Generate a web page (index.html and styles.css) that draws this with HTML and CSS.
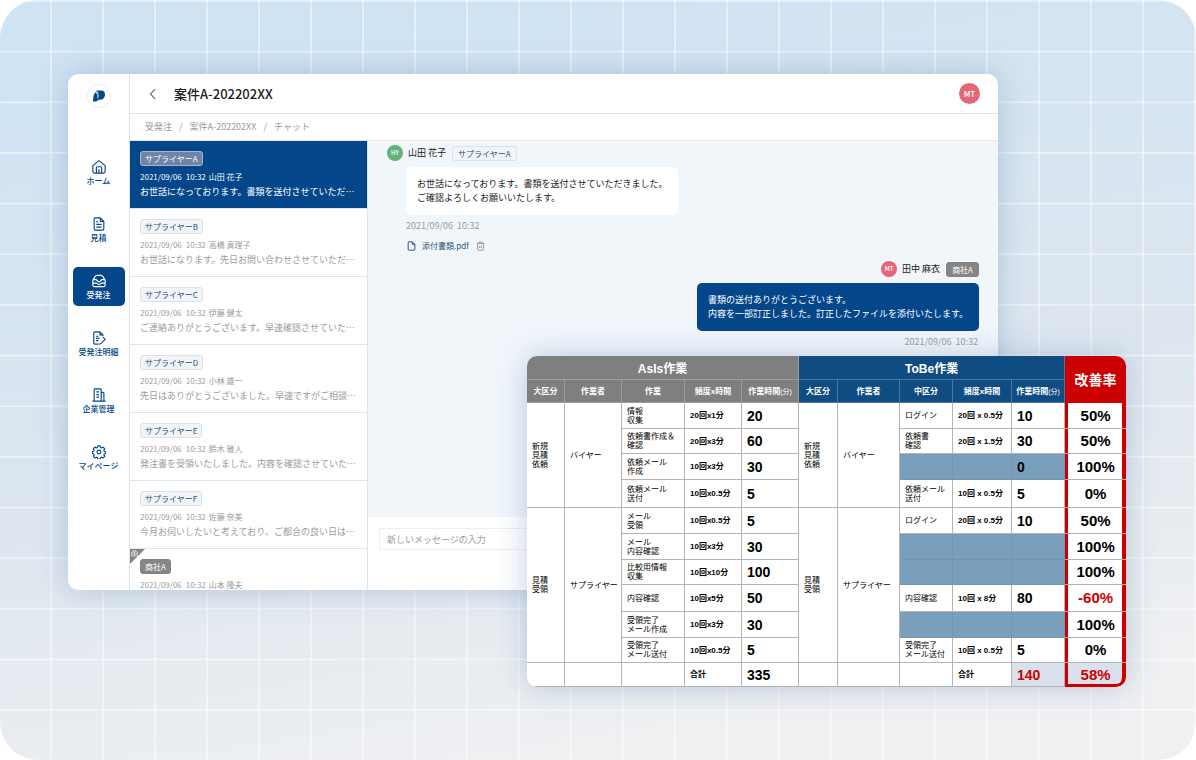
FILE: index.html
```html
<!DOCTYPE html>
<html lang="ja">
<head>
<meta charset="utf-8">
<title>案件A-202202XX</title>
<link rel="stylesheet" href="styles.css">
</head>
<body>
<main class="stage">
  <section class="app">
    <aside class="side">
      <a class="logo" href="#" aria-label="トップ">
        <svg viewBox="0 0 24 24"><path d="M9 6h5.500c2.600 0 4 1.800 4 4.300 0 3.500-2.200 5.700-6 5.700H11z"/><path d="M8.500 8C6.500 9.500 5.500 12 5.500 18H8c2.500 0 3.500-1.500 3.500-4z"/><path class="slit" d="M9.800 7c1.300 2 1.500 5 .7 7.500"/></svg>
      </a>
      <nav class="nav">
        <a class="nav-item" href="#"><svg viewBox="0 0 16 16"><path d="M1 6.500v6.700C1 14.300 1.700 15 2.800 15h10.400c1.100 0 1.800-.7 1.800-1.800V6.500L8.900 1.300a1.400 1.400 0 0 0-1.800 0zM5 15V9c0-.8.500-1.300 1.200-1.300h3.600c.7 0 1.200.5 1.200 1.300v6M8 10.500V15"/></svg>ホーム</a>
        <a class="nav-item" href="#"><svg viewBox="0 0 16 16"><path d="M9.500 1H4a1.500 1.500 0 0 0-1.500 1.500v11A1.500 1.500 0 0 0 4 15h8a1.500 1.500 0 0 0 1.500-1.500V5zM9.500 1v4h4M5 5.500h2M5 8.500h6M5 11.500h6"/></svg>見積</a>
        <a class="nav-item active" href="#"><svg viewBox="0 0 16 16"><path d="M1 7 3.500 3C4.200 1.900 5 1.500 6 1.500h4c1 0 1.800.4 2.500 1.500L15 7v5.500c0 1.200-.8 2-2 2H3c-1.200 0-2-.8-2-2zM1 6.500h3.500C6 6.500 6 9 8 9s2-2.500 3.500-2.500H15M1 10.500h4c.8 0 1 1.500 3 1.500s2.200-1.500 3-1.500h4"/></svg>受発注</a>
        <a class="nav-item" href="#"><svg viewBox="0 0 16 16"><path d="M12.500 6V4.500L9 1H3.500A1.500 1.500 0 0 0 2 2.500v11A1.500 1.500 0 0 0 3.500 15H7M9 1v3.500h3.500M4.500 6h3M4.500 8.500h4M4.500 11h3M12.500 7l2.500 2.500-5 5-2.500.5"/></svg>受発注明細</a>
        <a class="nav-item" href="#"><svg viewBox="0 0 16 16"><path d="M.5 15h15M2.500 15V2c0-.6.400-1 1-1h6c.6 0 1 .4 1 1v13M10.500 4.500l2.500.8c.4.100.6.400.6.700v9M5 4.500h3M5 7.500h3M5 10.500h3"/></svg>企業管理</a>
        <a class="nav-item" href="#"><svg viewBox="0 0 16 16"><circle cx="8" cy="8" r="2.200"/><path d="M6.700 1h2.600l.5 1.900 1.100.5 1.700-1 1.900 1.900-1 1.700.5 1.100 1.500.5v1.800l-1.500.8-.5 1.100 1 1.700-1.900 1.900-1.700-1-1.100.5-.5 1.600H6.700l-.5-1.600-1.100-.5-1.700 1L1.500 13l1-1.700L2 10.200.5 9.400V7.600L2 7.100 2.500 6l-1-1.700 1.900-1.900 1.700 1 1.100-.5z"/></svg>マイページ</a>
      </nav>
    </aside>
    <div class="body">
      <header class="head">
        <button class="back" aria-label="戻る"><svg viewBox="0 0 10 10"><path d="M7 0 2.500 5 7 10"/></svg></button>
        <h1 class="title">案件A-202202XX</h1>
        <span class="avatar avatar-lg red">MT</span>
      </header>
      <nav class="crumbs"><a href="#">受発注</a><span>/</span><a href="#">案件A-202202XX</a><span>/</span><span>チャット</span></nav>
      <div class="panes">
        <div class="list">
          <a class="item selected" href="#"><span class="tag">サプライヤーA</span><span class="meta"><time>2021/09/06&ensp;10:32</time><span>山田 花子</span></span><span class="preview">お世話になっております。書類を送付させていただ…</span></a>
          <a class="item" href="#"><span class="tag">サプライヤーB</span><span class="meta"><time>2021/09/06&ensp;10:32</time><span>高橋 真理子</span></span><span class="preview">お世話になります。先日お問い合わせさせていただ…</span></a>
          <a class="item" href="#"><span class="tag">サプライヤーC</span><span class="meta"><time>2021/09/06&ensp;10:32</time><span>伊藤 健太</span></span><span class="preview">ご連絡ありがとうございます。早速確認させていた…</span></a>
          <a class="item" href="#"><span class="tag">サプライヤーD</span><span class="meta"><time>2021/09/06&ensp;10:32</time><span>小林 雄一</span></span><span class="preview">先日はありがとうございました。早速ですがご相談…</span></a>
          <a class="item" href="#"><span class="tag">サプライヤーE</span><span class="meta"><time>2021/09/06&ensp;10:32</time><span>鈴木 雅人</span></span><span class="preview">発注書を受領いたしました。内容を確認させていた…</span></a>
          <a class="item" href="#"><span class="tag">サプライヤーF</span><span class="meta"><time>2021/09/06&ensp;10:32</time><span>佐藤 奈美</span></span><span class="preview">今月お伺いしたいと考えており、ご都合の良い日は…</span></a>
          <a class="item" href="#"><svg class="corner" viewBox="0 0 15 15"><path class="fold" d="M0 0h15L0 15z"/><path class="case" d="M1.500 3h6v4h-6zM3.300 3V1.500h2.400V3M1.500 5h6M4.500 3v4"/></svg><span class="tag dark">商社A</span><span class="meta"><time>2021/09/06&ensp;10:32</time><span>山本 隆夫</span></span></a>
        </div>
        <div class="chat">
          <div class="log">
            <article class="msg">
              <div class="from"><span class="avatar green">HY</span><span class="name">山田 花子</span><span class="tag">サプライヤーA</span></div>
              <p class="bubble">お世話になっております。書類を送付させていただきました。<br>ご確認よろしくお願いいたします。</p>
              <time class="stamp">2021/09/06&nbsp; 10:32</time>
              <div class="file">
                <svg viewBox="0 0 10 12"><path d="M6 1H2c-.6 0-1 .4-1 1v8c0 .6.400 1 1 1h6c.6 0 1-.4 1-1V4zM6 1v3h3"/></svg>
                <a href="#">添付書類.pdf</a>
                <button class="trash" aria-label="削除"><svg viewBox="0 0 10 12"><path d="M.5 3h9M3 3V1.200h4V3M1.500 3v7.300c0 .4.300.7.700.7h5.600c.4 0 .7-.3.700-.7V3M4 5.500v3M6 5.500v3"/></svg></button>
              </div>
            </article>
            <article class="msg own">
              <div class="from"><span class="avatar red">MT</span><span class="name">田中 麻衣</span><span class="tag dark">商社A</span></div>
              <p class="bubble">書類の送付ありがとうございます。<br>内容を一部訂正しました。訂正したファイルを添付いたします。</p>
              <time class="stamp">2021/09/06&nbsp; 10:32</time>
            </article>
          </div>
          <div class="composer"><input class="box" type="text" aria-label="メッセージ" placeholder="新しいメッセージの入力"></div>
        </div>
      </div>
    </div>
  </section>

  <section class="sheet">
    <table class="compare">
      <colgroup><col class="w38"><col class="w57"><col class="w63"><col class="w57"><col class="w57"><col class="w39"><col class="w62"><col class="w53"><col class="w59"><col class="w53"><col class="w61"></colgroup>
      <thead>
        <tr class="r24"><th class="group asis" colspan="5">AsIs作業</th><th class="group tobe" colspan="5">ToBe作業</th><th class="rate-head" rowspan="2">改善率</th></tr>
        <tr class="r23"><th class="asis">大区分</th><th class="asis">作業者</th><th class="asis">作業</th><th class="asis">頻度x時間</th><th class="asis">作業時間<small>(分)</small></th><th class="tobe">大区分</th><th class="tobe">作業者</th><th class="tobe">中区分</th><th class="tobe">頻度x時間</th><th class="tobe">作業時間<small>(分)</small></th></tr>
      </thead>
      <tbody>
        <tr class="r26"><td rowspan="4">新規<br>見積<br>依頼</td><td rowspan="4">バイヤー</td><td>情報<br>収集</td><td class="freq">20回x1分</td><td class="num">20</td><td rowspan="4">新規<br>見積<br>依頼</td><td rowspan="4">バイヤー</td><td>ログイン</td><td class="freq">20回 x 0.5分</td><td class="num">10</td><td class="rate">50%</td></tr>
        <tr class="r25"><td>依頼書作成＆<br>確認</td><td class="freq">20回x3分</td><td class="num">60</td><td>依頼書<br>確認</td><td class="freq">20回 x 1.5分</td><td class="num">30</td><td class="rate">50%</td></tr>
        <tr class="r26"><td>依頼メール<br>作成</td><td class="freq">10回x3分</td><td class="num">30</td><td class="gone"></td><td class="gone"></td><td class="num gone">0</td><td class="rate">100%</td></tr>
        <tr class="r28"><td>依頼メール<br>送付</td><td class="freq">10回x0.5分</td><td class="num">5</td><td>依頼メール<br>送付</td><td class="freq">10回 x 0.5分</td><td class="num">5</td><td class="rate">0%</td></tr>
        <tr class="r26"><td rowspan="6">見積<br>受領</td><td rowspan="6">サプライヤー</td><td>メール<br>受領</td><td class="freq">10回x0.5分</td><td class="num">5</td><td rowspan="6">見積<br>受領</td><td rowspan="6">サプライヤー</td><td>ログイン</td><td class="freq">20回 x 0.5分</td><td class="num">10</td><td class="rate">50%</td></tr>
        <tr class="r26"><td>メール<br>内容確認</td><td class="freq">10回x3分</td><td class="num">30</td><td class="gone"></td><td class="gone"></td><td class="gone"></td><td class="rate">100%</td></tr>
        <tr class="r25"><td>比較用情報<br>収集</td><td class="freq">10回x10分</td><td class="num">100</td><td class="gone"></td><td class="gone"></td><td class="gone"></td><td class="rate">100%</td></tr>
        <tr class="r27"><td>内容確認</td><td class="freq">10回x5分</td><td class="num">50</td><td>内容確認</td><td class="freq">10回 x 8分</td><td class="num">80</td><td class="rate hot">-60%</td></tr>
        <tr class="r26"><td>受領完了<br>メール作成</td><td class="freq">10回x3分</td><td class="num">30</td><td class="gone"></td><td class="gone"></td><td class="gone"></td><td class="rate">100%</td></tr>
        <tr class="r25"><td>受領完了<br>メール送付</td><td class="freq">10回x0.5分</td><td class="num">5</td><td>受領完了<br>メール送付</td><td class="freq">10回 x 0.5分</td><td class="num">5</td><td class="rate">0%</td></tr>
        <tr class="r24"><td></td><td></td><td></td><td class="freq">合計</td><td class="num">335</td><td></td><td></td><td></td><td class="freq">合計</td><td class="num total hot">140</td><td class="rate total hot last">58%</td></tr>
      </tbody>
    </table>
  </section>
</main>
</body>
</html>
```
FILE: styles.css
```css
* { box-sizing: border-box; }

body {
  margin: 0;
  background: #fff;
  font-family: "Noto Sans CJK JP", sans-serif;
  color: #222;
}

a { color: inherit; text-decoration: none; }
button { padding: 0; border: 0; background: none; }
svg { display: block; fill: none; }

.stage {
  position: relative;
  height: 100vh;
  min-height: 760px;
  overflow: hidden;
  border-radius: 38px;
  background-image:
    linear-gradient(to bottom, rgba(255, 255, 255, .45) 2px, transparent 2px),
    linear-gradient(to left, rgba(255, 255, 255, .45) 2px, transparent 2px),
    linear-gradient(170deg, #d0e3f3 10%, #dde6ef 55%, #eff0f2 88%);
  background-size: 100% calc(100% / 15), 52px 100%, 100% 100%;
}

/* application window */
.app {
  position: absolute;
  inset: 74px 198px 170px 68px;
  display: flex;
  overflow: hidden;
  border-radius: 10px;
  background: #fff;
  box-shadow: 0 0 30px rgba(120, 150, 190, .45);
}

.side {
  display: flex;
  flex-direction: column;
  align-items: center;
  flex: 0 0 62px;
  padding-top: 10px;
  border-right: 1px solid #dbe5ef;
}

.logo {
  width: 24px;
  height: 24px;
  border: 1px solid #e9edf2;
  border-radius: 50%;
}
.logo svg { fill: #04468a; }
.logo .slit { fill: none; stroke: #fff; stroke-width: 1; }

.nav {
  display: flex;
  flex-direction: column;
  gap: 18px;
  margin-top: 45px;
}

.nav-item {
  display: flex;
  flex-direction: column;
  align-items: center;
  gap: 1px;
  width: 52px;
  height: 39px;
  padding-top: 7px;
  border-radius: 5px;
  color: #04468a;
  font-size: 8px;
  font-weight: 500;
  line-height: 12px;
}
.nav-item svg { width: 14px; height: 14px; stroke: currentColor; stroke-width: 1.3; stroke-linejoin: round; }
.nav-item.active { background: #04468a; color: #fff; }

.body { display: flex; flex-direction: column; flex: 1; min-width: 0; }

.head {
  display: flex;
  align-items: center;
  height: 40px;
  padding: 0 18px;
  border-bottom: 1px solid #dbe5ef;
}
.back svg { width: 10px; height: 10px; stroke: #777; stroke-width: 1.2; }
.title { margin: 0 auto 0 16px; font-size: 13px; font-weight: 500; line-height: 20px; }

.avatar {
  width: 16px;
  height: 16px;
  border-radius: 50%;
  color: #fff;
  font-size: 6px;
  font-weight: 500;
  line-height: 16px;
  text-align: center;
}
.avatar-lg { width: 21px; height: 21px; font-size: 8px; line-height: 21px; }
.red { background: #e46775; }
.green { background: #64b07f; }

.crumbs {
  display: flex;
  align-items: center;
  gap: 7px;
  height: 27px;
  padding-left: 15px;
  border-bottom: 1px solid #e4eaf0;
  color: #9b9b9b;
  font-size: 9px;
  line-height: 14px;
}

.panes { display: flex; flex: 1; min-height: 0; }

.list { flex: 0 0 238px; overflow: hidden; border-right: 1px solid #dbe5ef; }

.item {
  position: relative;
  display: flex;
  flex-direction: column;
  align-items: flex-start;
  height: 68px;
  padding: 10px 10px 0;
  border-bottom: 1px solid #dbe5ef;
  color: #9b9b9b;
}
.item .meta { margin-top: 5px; }
.item.selected { background: #04468a; color: #fff; }
.item.selected .tag { border-color: #a9b7cd; background: #6f84a8; color: #fff; }

.tag {
  height: 15px;
  padding: 0 4px;
  border: 1px solid #dde2e8;
  border-radius: 3px;
  background: #f2f5f8;
  color: #2c4f7c;
  font-size: 8px;
  line-height: 14px;
  white-space: nowrap;
}
.tag.dark { border-color: #828282; background: #868686; color: #fff; }

.meta { display: flex; gap: 3px; font-size: 8px; line-height: 12px; white-space: nowrap; }
.preview { margin-top: 2px; font-size: 9px; line-height: 14px; white-space: nowrap; }

.corner { position: absolute; top: 0; left: 0; width: 15px; height: 15px; }
.corner .fold { fill: #868686; }
.corner .case { stroke: #ddd; stroke-width: .8; }

.chat { display: flex; flex-direction: column; flex: 1; min-width: 0; }

.log {
  display: flex;
  flex-direction: column;
  flex: 1;
  gap: 8px;
  padding: 4px 19px 0;
  background: #f1f6fb;
}

.msg { display: flex; flex-direction: column; align-items: flex-start; }
.from { display: flex; align-items: center; gap: 5px; height: 16px; }
.from .tag { margin-left: 1px; padding: 0 5px; }
.from .name { font-size: 9px; line-height: 14px; }
.bubble {
  margin: 6px 0 0 19px;
  padding: 10px 11px;
  border-radius: 5px;
  background: #fff;
  font-size: 9px;
  line-height: 14px;
}
.stamp { margin: 4px 0 0 19px; color: #9b9b9b; font-size: 9px; line-height: 14px; }
.file {
  display: flex;
  align-items: center;
  gap: 6px;
  margin: 6px 0 0 20px;
  color: #2c4f7c;
  font-size: 8px;
  line-height: 14px;
}
.file svg { width: 9px; height: 10px; stroke: currentColor; stroke-width: 1.2; }
.trash { margin-left: 1px; color: #9b9b9b; }

.own { align-items: flex-end; }
.own .bubble { margin-left: 0; background: #04468a; color: #fff; }
.own .stamp { margin-right: 1px; }

.composer { height: 73px; padding: 11px 19px 0 11px; background: #fff; }
.box {
  display: block;
  width: 100%;
  height: 22px;
  padding: 0 7px;
  border: 1px solid #eceef1;
  background: #fff;
  font: 9px/14px "Noto Sans CJK JP", sans-serif;
}
.box::placeholder { color: #9b9b9b; }

/* comparison sheet */
.sheet {
  position: absolute;
  top: 356px;
  right: 70px;
  left: 527px;
  border-radius: 10px;
  background: #fff;
  box-shadow: 0 0 30px rgba(120, 150, 190, .45);
}

.compare {
  width: 100%;
  overflow: hidden;
  border-spacing: 0;
  border-radius: 10px;
  table-layout: fixed;
  color: #000;
  font-family: "Liberation Sans", "Noto Sans CJK JP", sans-serif;
  font-size: 8px;
  line-height: 9px;
}

.w38 { width: 38px; } .w39 { width: 39px; } .w53 { width: 53px; }
.w57 { width: 57px; } .w59 { width: 59px; } .w61 { width: 61px; }
.w62 { width: 62px; } .w63 { width: 63px; }

.r23 { height: 23px; } .r24 { height: 24px; } .r25 { height: 25px; }
.r26 { height: 26px; } .r27 { height: 27px; } .r28 { height: 28px; }

.compare th, .compare td {
  padding: 0 0 0 5px;
  border: 0 solid #b4b4b4;
  border-width: 0 1px 1px 0;
  text-align: left;
  vertical-align: middle;
  white-space: nowrap;
  font-weight: 400;
}
.compare th {
  padding: 0;
  color: #fff;
  text-align: center;
  font-weight: 700;
}
.compare th small { font-size: 7px; font-weight: 400; }
.compare .group { padding-top: 2px; font-size: 12px; line-height: 16px; }
.compare .asis { border-color: #9c9c9c; background: #7f7f7f; }
.compare .tobe { border-color: #4d77a2; background: #0f4c81; }
.compare .rate-head { border-width: 0; background: #c00; font-size: 14px; line-height: 18px; }

.compare .freq { font-weight: 700; }
.compare .num { font-size: 14px; font-weight: 700; line-height: 16px; }
.compare .gone { border-color: #7297b3; background: #799fbc; }
.compare .num.gone { color: #000; }
.compare .rate {
  padding: 0;
  border-right: 0;
  box-shadow: inset 3px 0 #c00, inset -4px 0 #c00;
  text-align: center;
  font-size: 15px;
  font-weight: 700;
  line-height: 16px;
}
.compare .total { background: #d9e2ec; }
.compare .hot { color: #c00; }
.compare .last {
  border-bottom: 0;
  border-radius: 0 0 10px 0;
  box-shadow: inset 3px 0 #c00, inset -4px 0 #c00, inset 0 -3px #c00;
}
```
